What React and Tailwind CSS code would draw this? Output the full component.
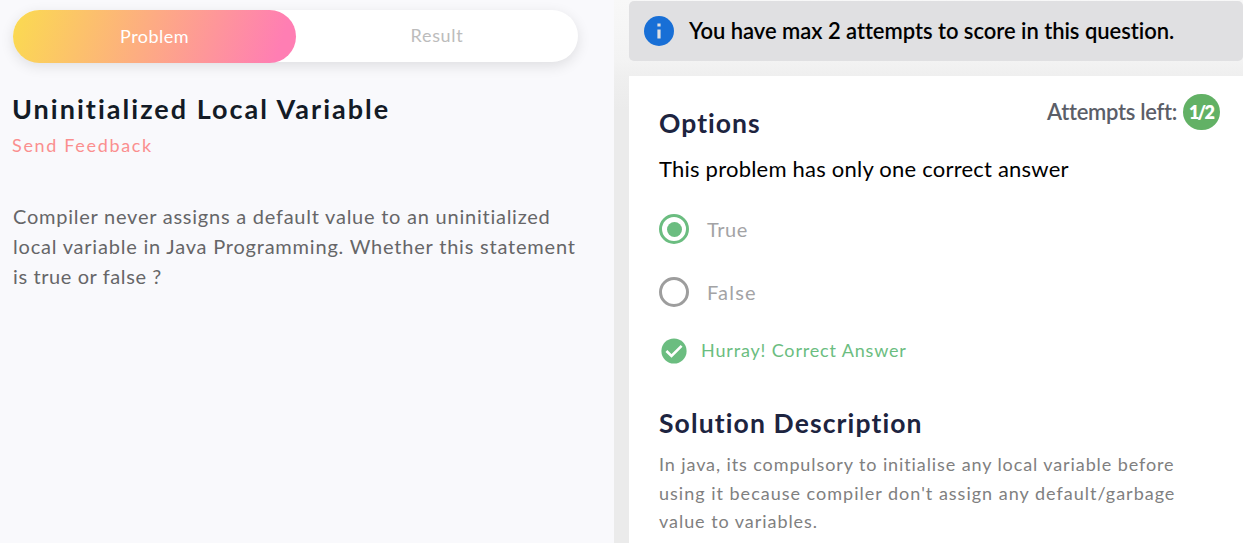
const statement = [
  ["Compiler never assigns a default value to an uninitialized", "tracking-[0.76px]"],
  ["local variable in Java Programming. Whether this statement", "tracking-[0.79px]"],
  ["is true or false ?", "tracking-[0.6px]"],
];

const solution = [
  ["In java, its compulsory to initialise any local variable before", "tracking-[0.9px]"],
  ["using it because compiler don't assign any default/garbage", "tracking-[1px]"],
  ["value to variables.", "tracking-[0.95px]"],
];

function Lines({ items }) {
  return items.map(([text, tracking]) => (
    <span key={text} className={`block whitespace-nowrap ${tracking}`}>
      {text}
    </span>
  ));
}

function Tabs() {
  return (
    <div className="flex h-[53px] w-[565px] items-start">
      <div className="flex h-[52px] w-full rounded-full bg-white shadow-[0_4px_14px_rgba(0,0,0,0.11)]">
        <button className="h-[53px] w-[283px] shrink-0 rounded-full bg-[linear-gradient(108deg,#fbd952_2%,#ff7eb3_93%)] pb-px text-[18px] leading-[52px] tracking-[0.45px] text-white">
          Problem
        </button>
        <button className="flex-1 pb-[2px] text-[18px] leading-[50px] tracking-[0.7px] text-[#bcbcbc]">Result</button>
      </div>
    </div>
  );
}

function ProblemPanel() {
  return (
    <section className="w-[614px] shrink-0 bg-[#f9f9fc] pt-[10px] pl-[13px]">
      <Tabs />
      <h1 className="mt-[30px] -ml-px text-[27px] leading-8 font-bold tracking-[2.02px] whitespace-nowrap text-[#131b26]">
        Uninitialized Local Variable
      </h1>
      <a className="mt-2 -ml-px block text-[18px] leading-6 tracking-[1.67px] text-[#fb8f8f]">Send Feedback</a>
      <p className="mt-[44px] text-[20px] leading-[30px] text-[#666668]">
        <Lines items={statement} />
      </p>
    </section>
  );
}

function Option({ label, selected }) {
  return (
    <label className="flex h-[30px] items-center gap-[18px]">
      {selected ? (
        <span className="flex size-[30px] items-center justify-center rounded-full border-[3px] border-[#6bbd80]">
          <span className="size-[15px] rounded-full bg-[#6bbd80]" />
        </span>
      ) : (
        <span className="size-[30px] rounded-full border-[3px] border-[#9d9d9d]" />
      )}
      <span className={`text-[20px] leading-[30px] text-[#a3a3a5] ${selected ? "tracking-[0.6px]" : "tracking-[1.2px]"}`}>
        {label}
      </span>
    </label>
  );
}

function AnswerCard() {
  return (
    <div className="flex-1 bg-white pt-[18px] pl-[30px]">
      <div className="flex h-[44px] items-start justify-between pr-[23px]">
        <h2 className="mt-[13px] text-[26.5px] leading-8 font-bold tracking-[1.05px] text-[#1d2440]">Options</h2>
        <div className="flex h-9 items-center gap-[6px]">
          <span className="pb-px text-[22px] leading-7 font-semibold tracking-[-0.3px] text-[#5b5e68]">Attempts left:</span>
          <span className="flex h-9 w-[37px] items-center justify-center rounded-full bg-[#62b165] text-[18px] font-extrabold tracking-[-1.8px] text-white">
            <span className="pr-px">1/2</span>
          </span>
        </div>
      </div>
      <p className="mt-[17px] text-[22px] leading-7 tracking-[0.22px] text-black">This problem has only one correct answer</p>
      <div className="mt-[31px] flex flex-col gap-[33px]">
        <Option label="True" selected />
        <Option label="False" />
      </div>
      <div className="mt-[31px] flex h-[26px] items-center gap-[14px] pl-[2px] text-[#6bbd80]">
        <svg viewBox="0 0 26 26" className="size-[26px]">
          <circle cx="13" cy="13" r="12.6" fill="currentColor" />
          <path d="M5.4 13 10.5 18 20.6 7.9" fill="none" stroke="#fff" strokeWidth="2.6" />
        </svg>
        <span className="pb-[2px] text-[18px] leading-6 tracking-[0.83px]">Hurray! Correct Answer</span>
      </div>
      <h2 className="mt-[43px] text-[26.5px] leading-8 font-bold tracking-[1.12px] text-[#1d2440]">Solution Description</h2>
      <p className="mt-[11px] text-[18px] leading-[28.5px] text-[#808080]">
        <Lines items={solution} />
      </p>
    </div>
  );
}

export default function App() {
  return (
    <main className="flex h-[543px] w-[1243px] overflow-hidden font-['Lato',sans-serif]">
      <ProblemPanel />
      <section className="flex flex-1 flex-col overflow-hidden bg-[linear-gradient(180deg,#f8f8f8_0px,#f3f3f3_60px,#efefef_76px,#ebebeb_110px)] pt-px pl-[15px]">
        <div className="mb-[15px] flex h-[60px] shrink-0 items-center gap-[15px] rounded-[5px] bg-[#e0e0e2] pl-[15px]">
          <svg viewBox="0 0 30 30" className="size-[30px]">
            <circle cx="15" cy="15" r="15" fill="#186fd6" />
            <path d="M13.4 7.5h3.2v3h-3.2zM13.4 13.5h3.2v9h-3.2z" fill="#e0e0e2" />
          </svg>
          <span className="pb-px text-[22px] leading-7 font-semibold tracking-[-0.04px] whitespace-nowrap text-black">
            You have max 2 attempts to score in this question.
          </span>
        </div>
        <AnswerCard />
      </section>
    </main>
  );
}
